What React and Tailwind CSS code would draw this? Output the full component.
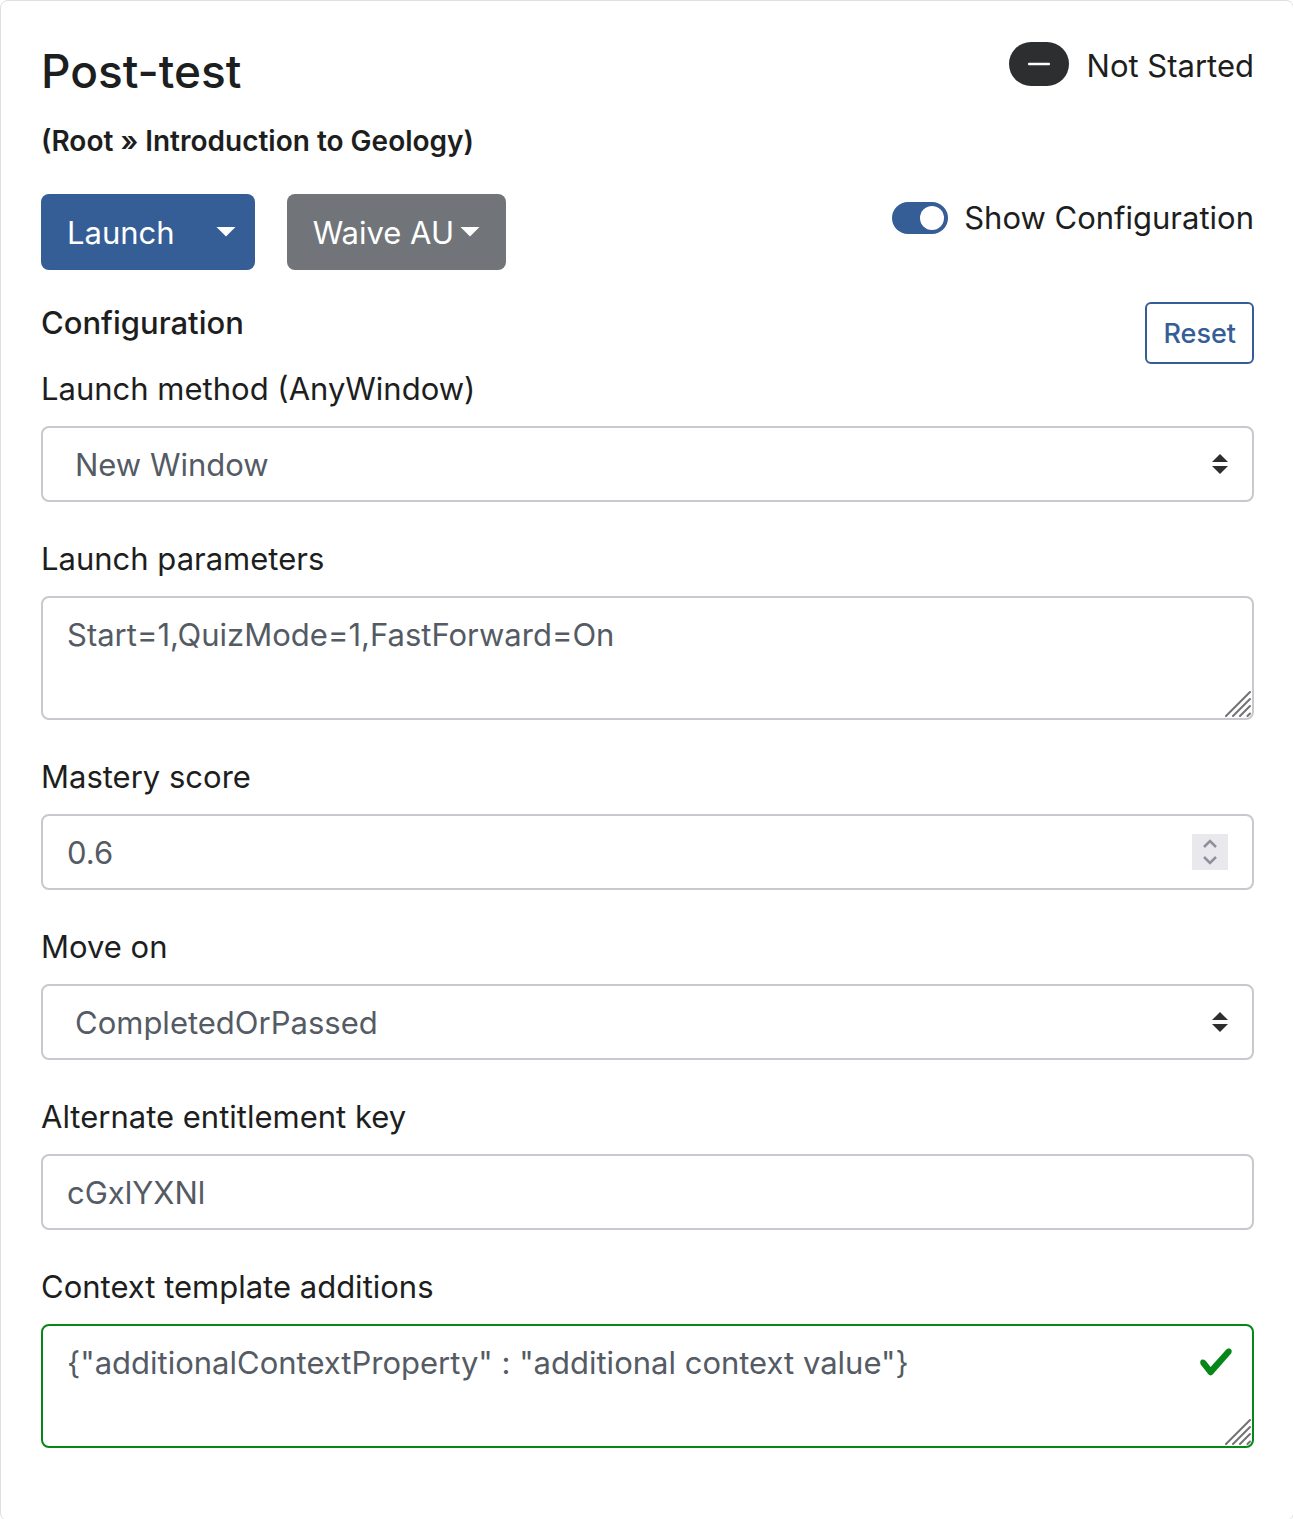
import React, { useState } from "react";

const control =
  "block w-full rounded-lg border-2 border-[#c6c9cd] bg-white text-[31px] leading-[48px] text-[#545b64] outline-none focus:border-[#355e97]";

function Caret() {
  return (
    <svg viewBox="0 0 20 10" className="h-2.5 w-5 shrink-0" fill="currentColor" aria-hidden="true">
      <path d="M0.5 0h19L10 9.6z" />
    </svg>
  );
}

function ResizeGrip() {
  return (
    <svg
      viewBox="0 0 26 26"
      className="pointer-events-none absolute right-[3px] bottom-[3px] size-[26px]"
      stroke="#737373"
      strokeWidth="2"
      strokeLinecap="round"
      aria-hidden="true"
    >
      <path d="M1 25 25 1M8 25 25 8M15 25l10-10M22.5 25l2.5-2.5" />
    </svg>
  );
}

function Field({ id, label, children }) {
  return (
    <div className="mb-8">
      <label htmlFor={id} className="block pb-3 text-[31px] leading-[50px]">
        {label}
      </label>
      <div className="relative">{children}</div>
    </div>
  );
}

function Select({ id, options }) {
  return (
    <>
      <select id={id} defaultValue={options[0]} className={`${control} h-19 appearance-none pt-0.5 pr-16 pl-8`}>
        {options.map((option) => (
          <option key={option}>{option}</option>
        ))}
      </select>
      <svg
        viewBox="0 0 16 20"
        className="pointer-events-none absolute top-7 right-[26px] h-5 w-4"
        fill="#2d2e30"
        aria-hidden="true"
      >
        <path d="M0 8 8 0l8 8zM0 12h16l-8 8z" />
      </svg>
    </>
  );
}

function StepButton({ label, path, onClick }) {
  return (
    <button type="button" aria-label={label} onClick={onClick} className="flex h-[18px] w-9 items-center justify-center">
      <svg viewBox="0 0 14 18" className="h-[18px] w-3.5" fill="none" stroke="#8f8f9d" strokeWidth="2.6" aria-hidden="true">
        <path d={path} />
      </svg>
    </button>
  );
}

export default function App() {
  const [score, setScore] = useState(0.6);
  const [shown, setShown] = useState(true);
  const step = (delta) => setScore((value) => Math.round((Number(value) + delta) * 10) / 10);

  return (
    <div className="overflow-hidden bg-white font-['Inter',sans-serif] text-[#1d1e20]">
      <main className="-mr-px -mb-0.5 rounded-lg border border-[#dfdfdf] pt-10 pr-[39px] pb-10 pl-10">
        <div className="flex items-start justify-between">
          <div>
            <h1 className="mb-5 text-[46px] leading-[60px] font-medium">Post-test</h1>
            <p className="mb-8 text-[28px] leading-[41px] font-semibold">(Root » Introduction to Geology)</p>
          </div>
          <div className="flex items-start gap-4.5">
            <span className="mt-px flex h-11 w-15 items-center justify-center rounded-full bg-[#2d2e30]">
              <svg viewBox="0 0 22 4" className="h-1 w-[22px]" aria-hidden="true">
                <rect y="0.7" width="22" height="2.6" rx="1" fill="#fff" />
              </svg>
            </span>
            <span className="text-[31px] leading-[50px]">Not Started</span>
          </div>
        </div>

        <div className="mb-8 flex items-start justify-between">
          <div className="flex gap-8 text-[31px] leading-[48px] text-white">
            <div className="flex h-19 overflow-hidden rounded-lg bg-[#355e97]">
              <button type="button" className="pt-0.5 pr-[22px] pl-[26px]">
                Launch
              </button>
              <button type="button" aria-label="More launch options" className="flex items-center px-[19px]">
                <Caret />
              </button>
            </div>
            <button type="button" className="flex h-19 items-center gap-1.5 rounded-lg bg-[#717579] px-[26px]">
              <span className="pt-0.5">Waive AU</span>
              <Caret />
            </button>
          </div>
          <label className="flex items-center gap-4 text-[31px] leading-[48px]">
            <input
              type="checkbox"
              role="switch"
              checked={shown}
              onChange={(event) => setShown(event.target.checked)}
              className="flex h-8 w-14 appearance-none items-center rounded-full bg-[#adb5bd] px-1 before:size-6 before:rounded-full before:bg-white checked:justify-end checked:bg-[#355e97]"
            />
            Show Configuration
          </label>
        </div>

        {shown && (
          <form onSubmit={(event) => event.preventDefault()}>
            <div className="flex items-start justify-between">
              <h2 className="text-[31px] leading-[42px] font-medium">Configuration</h2>
              <button
                type="button"
                className="h-[62px] rounded-md border-2 border-[#355e97] px-4 pt-0.5 text-[27px] leading-[42px] font-medium text-[#355e97]"
              >
                Reset
              </button>
            </div>

            <Field id="method" label="Launch method (AnyWindow)">
              <Select id="method" options={["New Window", "Own Window"]} />
            </Field>

            <Field id="parameters" label="Launch parameters">
              <textarea
                id="parameters"
                defaultValue="Start=1,QuizMode=1,FastForward=On"
                className={`${control} h-31 resize-none px-6 py-[13px]`}
              />
              <ResizeGrip />
            </Field>

            <Field id="score" label="Mastery score">
              <input
                id="score"
                type="number"
                step="0.1"
                value={score}
                onChange={(event) => setScore(event.target.value)}
                className={`${control} h-19 appearance-none px-6 [appearance:textfield] [&::-webkit-inner-spin-button]:appearance-none`}
              />
              <div className="absolute top-5 right-[26px] flex flex-col bg-[#e9e9ed]">
                <StepButton label="Increase" path="M1 13l6-6 6 6" onClick={() => step(0.1)} />
                <StepButton label="Decrease" path="M1 5l6 6 6-6" onClick={() => step(-0.1)} />
              </div>
            </Field>

            <Field id="move" label="Move on">
              <Select id="move" options={["CompletedOrPassed", "Completed", "Passed"]} />
            </Field>

            <Field id="key" label="Alternate entitlement key">
              <input id="key" type="text" defaultValue="cGxlYXNl" className={`${control} h-19 px-6`} />
            </Field>

            <Field id="context" label="Context template additions">
              <textarea
                id="context"
                defaultValue={'{"additionalContextProperty" : "additional context value"}'}
                className="block h-31 w-full resize-none rounded-lg border-2 border-[#068718] bg-white py-[13px] pr-19 pl-6 text-[31px] leading-[48px] text-[#545b64] outline-none"
              />
              <svg
                viewBox="0 0 8 8"
                className="pointer-events-none absolute top-5 right-5 size-9"
                fill="#068718"
                aria-hidden="true"
              >
                <path d="M2.3 6.73.6 4.53c-.4-1.04.46-1.4 1.1-.8l1.1 1.4 3.4-3.8c.6-.63 1.6-.27 1.2.7l-4 4.6c-.43.5-.8.4-1.1.1z" />
              </svg>
              <ResizeGrip />
            </Field>
          </form>
        )}
      </main>
    </div>
  );
}
